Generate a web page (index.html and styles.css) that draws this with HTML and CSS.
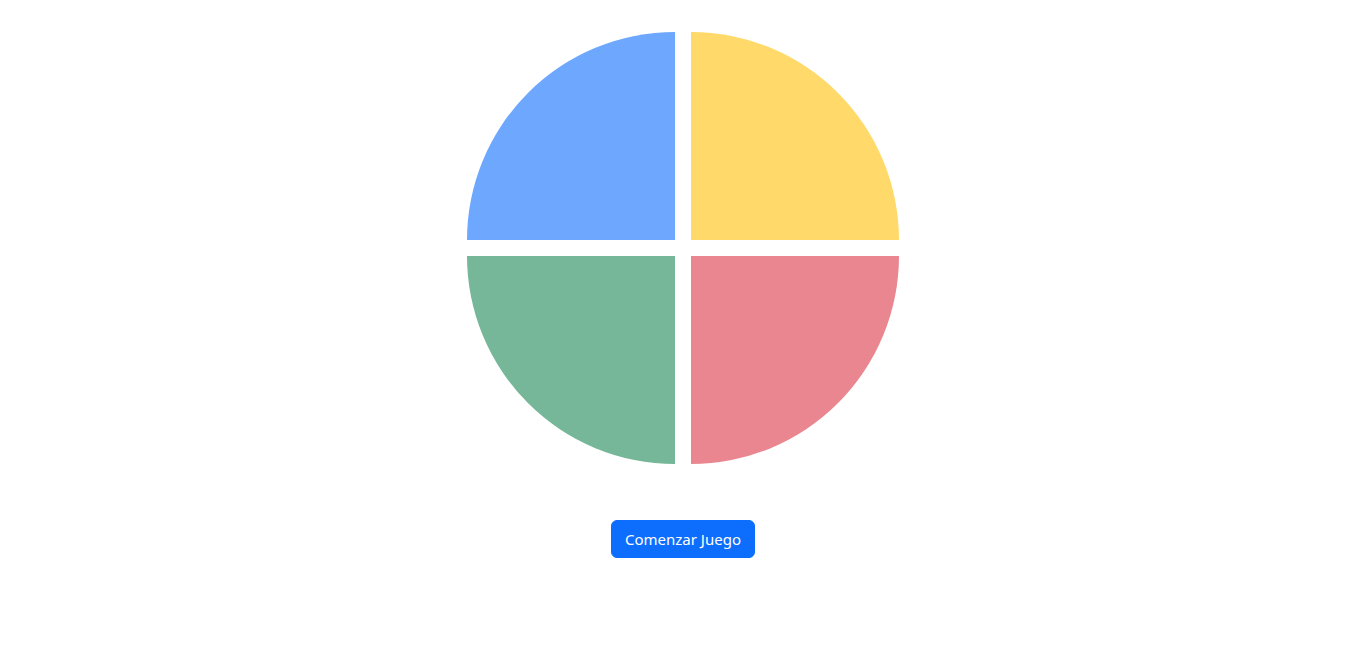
FILE: index.html
```html
<!DOCTYPE html>
<html lang="es">
<head>
<meta charset="utf-8">
<title>Simon</title>
<link rel="stylesheet" href="styles.css">
</head>
<body>
<main class="page">
  <div class="board">
    <div class="pad pad-blue"></div>
    <div class="pad pad-yellow"></div>
    <div class="pad pad-green"></div>
    <div class="pad pad-red"></div>
  </div>
  <button class="btn-start" type="button">Comenzar Juego</button>
</main>
</body>
</html>
```
FILE: styles.css
```css
html, body {
  margin: 0;
  padding: 0;
  background: #ffffff;
}

.page {
  display: flex;
  flex-direction: column;
  align-items: center;
  padding: 32px 0 0 4px;
  font-family: "Segoe UI", "Noto Sans", "Open Sans", sans-serif;
}

.board {
  display: grid;
  grid-template-columns: 208px 208px;
  grid-template-rows: 208px 208px;
  gap: 16px;
}

.pad {
  width: 208px;
  height: 208px;
}

.pad-blue {
  background: #6ea8fe;
  border-top-left-radius: 100%;
}

.pad-yellow {
  background: #ffda6a;
  border-top-right-radius: 100%;
}

.pad-green {
  background: #75b798;
  border-bottom-left-radius: 100%;
}

.pad-red {
  background: #ea868f;
  border-bottom-right-radius: 100%;
}

.btn-start {
  margin-top: 56px;
  height: 38px;
  padding: 0 13px;
  border: 1px solid #0d6efd;
  border-radius: 6px;
  background: #0d6efd;
  color: #ffffff;
  font-family: "Noto Sans", sans-serif;
  font-size: 15px;
  line-height: 1.5;
  cursor: pointer;
}
```
